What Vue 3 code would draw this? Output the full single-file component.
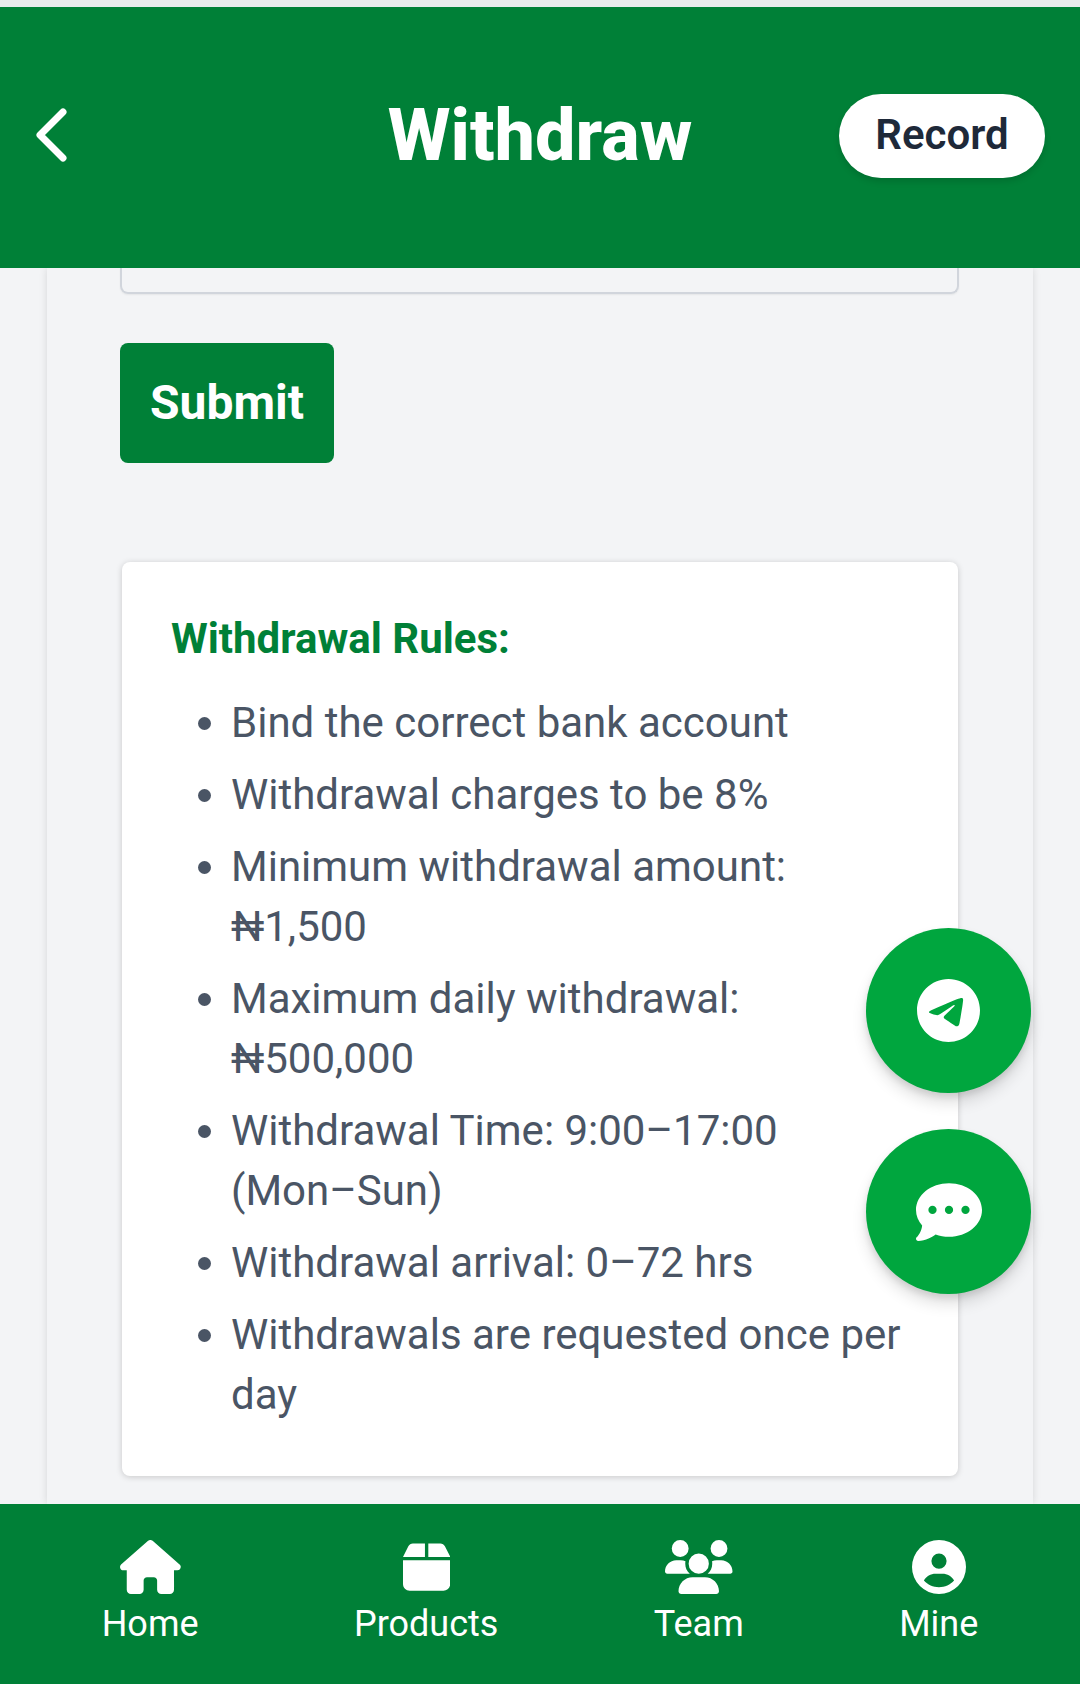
<script setup>
const rules = [
  'Bind the correct bank account',
  'Withdrawal charges to be 8%',
  'Minimum withdrawal amount: ₦1,500',
  'Maximum daily withdrawal: ₦500,000',
  'Withdrawal Time: 9:00–17:00 (Mon–Sun)',
  'Withdrawal arrival: 0–72 hrs',
  'Withdrawals are requested once per day',
]
const nav = [
  { label: 'Home', box: '0 0 576 512', d: 'M575.8 255.5c0 18-15 32.1-32 32.1h-32l.7 160.2c0 2.7-.2 5.4-.5 8.1V472c0 22.1-17.9 40-40 40H456c-1.1 0-2.2 0-3.3-.1c-1.4 .1-2.8 .1-4.2 .1H416 392c-22.1 0-40-17.9-40-40V448 384c0-17.7-14.3-32-32-32H256c-17.7 0-32 14.3-32 32v64 24c0 22.1-17.9 40-40 40H160 128.1c-1.5 0-3-.1-4.5-.2c-1.2 .1-2.4 .2-3.6 .2H104c-22.1 0-40-17.9-40-40V360c0-.9 0-1.9 .1-2.8V287.6H32c-18 0-32-14-32-32.1c0-9 3-17 10-24L266.4 8c7-7 15-8 22-8s15 2 21 7L564.8 231.5c8 7 12 15 11 24z' },
  { label: 'Products', box: '0 0 448 512', d: 'M50.7 58.5L0 160H208V32H93.7C75.5 32 58.9 42.3 50.7 58.5zM240 160H448L397.3 58.5C389.1 42.3 372.5 32 354.3 32H240V160zm208 32H0V416c0 35.3 28.7 64 64 64H384c35.3 0 64-28.7 64-64V192z' },
  { label: 'Team', box: '0 0 640 512', d: 'M144 0a80 80 0 1 1 0 160A80 80 0 1 1 144 0zM512 0a80 80 0 1 1 0 160A80 80 0 1 1 512 0zM0 298.7C0 239.8 47.8 192 106.7 192h42.7c15.9 0 31 3.5 44.6 9.7c-1.3 7.2-1.9 14.7-1.9 22.3c0 38.2 16.8 72.5 43.3 96c-.2 0-.4 0-.7 0H21.3C9.6 320 0 310.4 0 298.7zM405.3 320c-.2 0-.4 0-.7 0c26.6-23.5 43.3-57.8 43.3-96c0-7.6-.7-15-1.9-22.3c13.6-6.3 28.7-9.7 44.6-9.7h42.7C592.2 192 640 239.8 640 298.7c0 11.8-9.6 21.3-21.3 21.3H405.3zM224 224a96 96 0 1 1 192 0 96 96 0 1 1 -192 0zM128 485.3C128 411.7 187.7 352 261.3 352H378.7C452.3 352 512 411.7 512 485.3c0 14.7-11.9 26.7-26.7 26.7H154.7c-14.7 0-26.7-11.9-26.7-26.7z' },
  { label: 'Mine', box: '0 0 512 512', d: 'M399 384.2C376.9 345.8 335.4 320 288 320H224c-47.4 0-88.9 25.8-111 64.2c35.2 39.2 86.2 63.8 143 63.8s107.8-24.7 143-63.8zM0 256a256 256 0 1 1 512 0A256 256 0 1 1 0 256zm256 16a72 72 0 1 0 0-144 72 72 0 1 0 0 144z' },
]
</script>

<template>
  <div class="page">
    <header class="header">
      <svg class="back" viewBox="0 0 32 54" fill="none" stroke="#fff" stroke-width="7" stroke-linecap="round" stroke-linejoin="round"><path d="M28 4 L5 27 L28 50" /></svg>
      <h1 class="title">Withdraw</h1>
      <button class="record">Record</button>
    </header>

    <main class="main">
      <section class="panel">
        <div class="field"></div>
        <button class="submit">Submit</button>
        <div class="rules">
          <h3 class="rules-title">Withdrawal Rules:</h3>
          <ul class="rules-list">
            <li v-for="r in rules" :key="r">{{ r }}</li>
          </ul>
        </div>
      </section>
    </main>

    <nav class="nav">
      <div v-for="n in nav" :key="n.label" class="nav-item">
        <svg class="nav-icon" :viewBox="n.box" fill="#fff"><path :d="n.d" /></svg>
        <span>{{ n.label }}</span>
      </div>
    </nav>

    <div class="fabs">
      <div class="fab">
        <svg class="fab-icon tg" viewBox="0 0 496 512" fill="#fff"><path d="M248,8C111.033,8,0,119.033,0,256S111.033,504,248,504,496,392.967,496,256,384.967,8,248,8ZM362.952,176.66c-3.732,39.215-19.881,134.378-28.1,178.3-3.476,18.584-10.322,24.816-16.948,25.425-14.4,1.326-25.338-9.517-39.287-18.661-21.827-14.308-34.158-23.215-55.346-37.177-24.485-16.135-8.612-25,5.342-39.5,3.652-3.793,67.107-61.51,68.335-66.746.153-.655.3-3.1-1.154-4.384s-3.59-.849-5.135-.5q-3.283.746-104.608,69.142-14.845,10.194-26.894,9.934c-8.855-.191-25.888-5.006-38.551-9.123-15.531-5.048-27.875-7.717-26.8-16.291q.84-6.7,18.45-13.7,108.446-47.248,144.628-62.3c68.872-28.647,83.183-33.623,92.511-33.789,2.052-.034,6.639.474,9.61,2.885a10.452,10.452,0,0,1,3.53,6.716A43.765,43.765,0,0,1,362.952,176.66Z" /></svg>
      </div>
      <div class="fab">
        <svg class="fab-icon" viewBox="0 0 512 512" fill="#fff"><path d="M256 448c141.4 0 256-93.1 256-208S397.4 32 256 32S0 125.1 0 240c0 45.1 17.7 86.8 47.7 120.9c-1.9 24.5-11.4 46.3-21.4 62.9c-5.5 9.2-11.1 16.6-15.2 21.6c-2.1 2.5-3.7 4.4-4.9 5.7c-.6 .6-1 1.1-1.3 1.4l-.3 .3 0 0 0 0 0 0 0 0c-4.6 4.6-5.9 11.4-3.4 17.4c2.5 6 8.3 9.9 14.8 9.9c28.7 0 57.6-8.9 81.6-19.3c22.9-9.9 42.4-21.9 54.3-30.6c31.8 11.5 67 17.9 104.1 17.9zM128 208a32 32 0 1 1 0 64 32 32 0 1 1 0-64zm128 0a32 32 0 1 1 0 64 32 32 0 1 1 0-64zm96 32a32 32 0 1 1 64 0 32 32 0 1 1 -64 0z" /></svg>
      </div>
    </div>
  </div>
</template>

<style>
html, body { margin: 0; padding: 0; }
</style>

<style scoped>
.page {
  position: relative;
  width: 1080px;
  height: 1684px;
  display: flex;
  flex-direction: column;
  overflow: hidden;
  background: #f3f4f6;
  border-top: 7px solid #e8ecec;
  box-sizing: border-box;
  font-family: Roboto, sans-serif;
}
.header {
  flex: none;
  height: 261px;
  background: #008037;
  display: flex;
  align-items: center;
  justify-content: space-between;
  padding: 0 35px 0 35px;
  position: relative;
}
.back { width: 32px; height: 54px; margin-top: -6px; }
.title {
  margin: -3px 0 0 0;
  position: absolute;
  left: 0;
  right: 0;
  text-align: center;
  font-size: 72px;
  line-height: 96px;
  font-weight: 800;
  color: #fff;
}
.record {
  position: relative;
  width: 206px;
  height: 84px;
  margin-top: -4px;
  padding: 0 0 2px;
  border: 0;
  border-radius: 42px;
  background: #fff;
  color: #1e2939;
  font-family: Roboto, sans-serif;
  font-size: 42px;
  font-weight: 600;
  box-shadow: 0 4px 6px rgba(0,0,0,.12);
}
.main {
  flex: 1;
  min-height: 0;
  overflow: hidden;
  padding: 0 47px;
}
.panel {
  height: 100%;
  box-shadow: 0 0 8px rgba(0,0,0,.12);
  padding: 0 74px 0 73px;
  background: #f3f4f6;
}
.field {
  height: 24px;
  border: 2px solid #d1d5dc;
  border-top: 0;
  border-radius: 0 0 8px 8px;
  box-shadow: 0 1px 2px rgba(0,0,0,.06);
}
.submit {
  display: block;
  margin-top: 49px;
  width: 214px;
  height: 120px;
  padding: 0 0 2px;
  border: 0;
  border-radius: 8px;
  background: #008037;
  color: #fff;
  font-family: Roboto, sans-serif;
  font-size: 48px;
  font-weight: 700;
}
.rules {
  margin: 99px 1px 0 2px;
  height: 914px;
  box-sizing: border-box;
  padding: 47px 48px 0 49px;
  background: #fff;
  border-radius: 8px;
  box-shadow: 0 1px 6px rgba(0,0,0,.18);
}
.rules-title {
  margin: 0;
  font-size: 42px;
  line-height: 60px;
  font-weight: 700;
  color: #008037;
}
.rules-list {
  margin: 24px 0 0;
  padding: 0 0 0 60px;
  list-style: disc;
  color: #4a5565;
  font-size: 42px;
  line-height: 60px;
}
.rules-list li + li { margin-top: 12px; }
.nav {
  flex: none;
  height: 180px;
  box-sizing: border-box;
  background: #008037;
  padding: 36px 24px 0;
  display: flex;
  justify-content: space-around;
  align-items: flex-start;
  color: #fff;
  font-size: 36px;
  line-height: 48px;
}
.nav-item {
  display: flex;
  flex-direction: column;
  align-items: center;
  gap: 6px;
}
.nav-icon { height: 54px; width: auto; display: block; }
.fabs {
  position: absolute;
  left: 866px;
  top: 921px;
  display: flex;
  flex-direction: column;
  gap: 36px;
}
.fab {
  width: 165px;
  height: 165px;
  border-radius: 50%;
  background: #00a63e;
  box-shadow: 0 10px 15px rgba(0,0,0,.12), 0 4px 6px rgba(0,0,0,.1);
  display: flex;
  align-items: center;
  justify-content: center;
}
.fab-icon { width: 66px; height: 66px; }
.fab-icon.tg { width: 65px; height: 65px; }
</style>
